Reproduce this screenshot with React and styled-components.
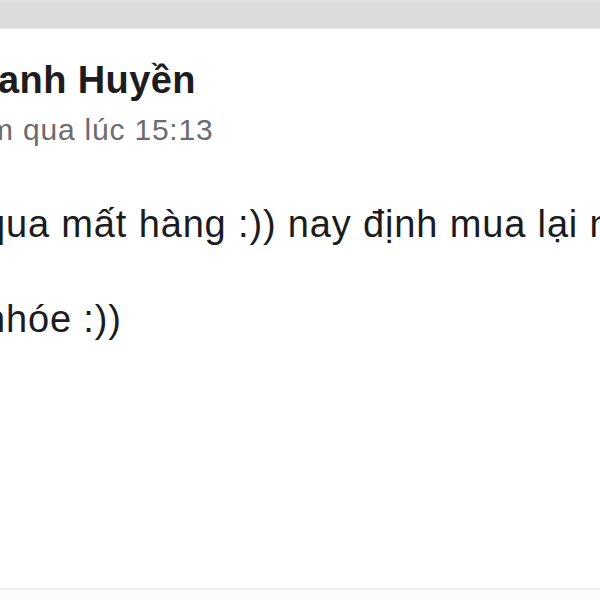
import React from 'react';
import styled, { createGlobalStyle } from 'styled-components';

const GlobalStyle = createGlobalStyle`
  html, body {
    margin: 0;
    padding: 0;
    background: #fbfbfb;
    font-family: "Liberation Sans", Arial, sans-serif;
  }
  #root {
    width: 600px;
    height: 600px;
    overflow: hidden;
  }
`;

const Screen = styled.div`
  width: 600px;
  height: 600px;
  display: flex;
  flex-direction: column;
  overflow: hidden;
`;

const TopBar = styled.div`
  height: 26px;
  flex-shrink: 0;
  background: #dcdcdc;
  border-top: 2px solid #e2e2e2;
  border-bottom: 1px solid #e9e9e9;
`;

const Card = styled.div`
  height: 561px;
  flex-shrink: 0;
  background: #ffffff;
  border-bottom: 2px solid #f0f0f0;
  padding-top: 28px;
  box-sizing: border-box;
  overflow: hidden;
  display: flex;
  flex-direction: column;
`;

// each line is cropped on its left by the screenshot edge
const Line = styled.div`
  white-space: nowrap;
  text-indent: ${(p) => p.shift}px;
`;

const Name = styled(Line)`
  font-size: 38px;
  line-height: 46px;
  font-weight: 700;
  letter-spacing: 0.4px;
  color: #1d1d1f;
`;

const Time = styled(Line)`
  margin-top: 9px;
  font-size: 30px;
  line-height: 36px;
  letter-spacing: 0.8px;
  color: #6c6c70;
`;

const Message = styled.div`
  margin-top: 52px;
  display: flex;
  flex-direction: column;
  gap: 47px;
`;

const Paragraph = styled(Line)`
  font-size: 38px;
  line-height: 48px;
  letter-spacing: 0.85px;
  color: #1c1c1e;
`;

function App() {
  return (
    <>
      <GlobalStyle />
      <Screen>
        <TopBar />
        <Card>
          <Name shift={-2}>anh Huyền</Name>
          <Time shift={-12}>m qua lúc 15:13</Time>
          <Message>
            <Paragraph shift={-16}>qua mất hàng :)) nay định mua lại nhưng hết</Paragraph>
            <Paragraph shift={-16}>nhóe :))</Paragraph>
          </Message>
        </Card>
      </Screen>
    </>
  );
}

export default App;
